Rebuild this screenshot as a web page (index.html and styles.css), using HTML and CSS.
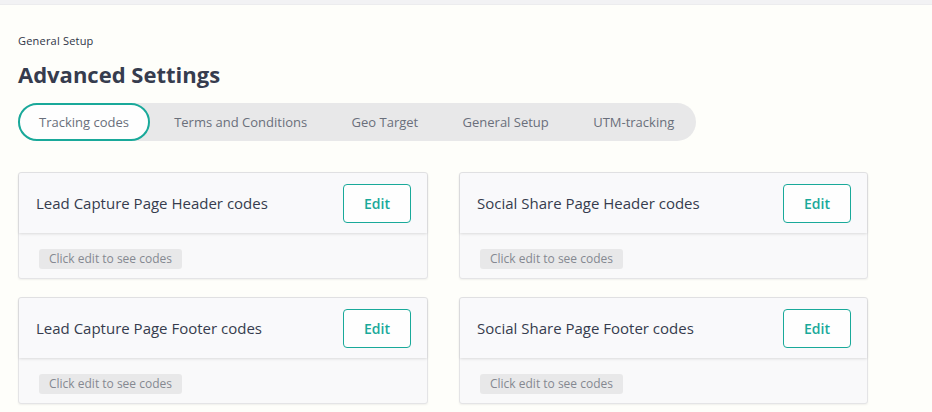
FILE: index.html
```html
<!DOCTYPE html>
<html>
<head>
<meta charset="utf-8">
<link rel="stylesheet" href="styles.css">
</head>
<body>
<div class="topstrip"></div>
<main class="page">
  <div class="crumb">General Setup</div>
  <h1 class="title">Advanced Settings</h1>
  <nav class="tabs">
    <span class="tab active">Tracking codes</span>
    <span class="tab">Terms and Conditions</span>
    <span class="tab">Geo Target</span>
    <span class="tab">General Setup</span>
    <span class="tab">UTM-tracking</span>
  </nav>
  <section class="grid">
    <div class="card">
      <div class="card-head"><span class="card-title">Lead Capture Page Header codes</span><button class="edit">Edit</button></div>
      <div class="card-body"><span class="badge">Click edit to see codes</span></div>
    </div>
    <div class="card">
      <div class="card-head"><span class="card-title">Social Share Page Header codes</span><button class="edit">Edit</button></div>
      <div class="card-body"><span class="badge">Click edit to see codes</span></div>
    </div>
    <div class="card">
      <div class="card-head"><span class="card-title">Lead Capture Page Footer codes</span><button class="edit">Edit</button></div>
      <div class="card-body"><span class="badge">Click edit to see codes</span></div>
    </div>
    <div class="card">
      <div class="card-head"><span class="card-title">Social Share Page Footer codes</span><button class="edit">Edit</button></div>
      <div class="card-body"><span class="badge">Click edit to see codes</span></div>
    </div>
  </section>
</main>
</body>
</html>
```
FILE: styles.css
```css
* { box-sizing: border-box; }
html, body { margin: 0; padding: 0; }
body {
  background: #fefefa;
  font-family: "Open Sans", "Noto Sans", sans-serif;
  color: #363c4e;
  width: 932px;
  height: 412px;
  overflow: hidden;
}
.topstrip {
  height: 5px;
  background: #f2f2f4;
  border-bottom: 1px solid #ececee;
}
.page {
  padding: 28px 0 0 18px;
}
.crumb {
  font-size: 11px;
  line-height: 15px;
  letter-spacing: 0.2px;
  color: #2f3546;
}
.title {
  margin: 11px 0 0;
  font-size: 22px;
  line-height: 30px;
  font-weight: 700;
  color: #363c4e;
}
.tabs {
  margin-top: 14px;
  display: inline-flex;
  align-items: center;
  height: 38px;
  background: #e8e8e9;
  border-radius: 19px;
}
.tab {
  height: 38px;
  display: flex;
  align-items: center;
  padding: 0 22.2px;
  font-size: 13px;
  color: #6a6f7b;
  border-radius: 19px;
}
.tab.active {
  background: #fefefe;
  border: 2px solid #19a99a;
  padding: 0 19px;
  margin-right: 2px;
}
.grid {
  margin-top: 31px;
  display: grid;
  grid-template-columns: 410px 409px;
  column-gap: 31px;
  row-gap: 18px;
}
.card {
  background: #f9f9fa;
  border: 1px solid #e4e4e6;
  border-radius: 3px;
  box-shadow: 0 1px 2px rgba(0,0,0,0.06);
  height: 107px;
}
.card-head {
  height: 60px;
  display: flex;
  align-items: center;
  justify-content: space-between;
  padding: 0 16px 0 17px;
  background: #f9f9fb;
  box-shadow: 0 1px 3px rgba(0,0,0,0.12);
  border-radius: 3px 3px 0 0;
}
.card-title {
  font-size: 15px;
  color: #363c4e;
}
.edit {
  width: 68px;
  height: 39px;
  border: 1px solid #19a99a;
  border-radius: 4px;
  background: #fefefe;
  color: #19a99a;
  font-family: "Open Sans", "Noto Sans", sans-serif;
  font-size: 14px;
  font-weight: 600;
  padding: 0;
}
.card-body {
  padding: 13px 0 0 20px;
}
.badge {
  display: inline-block;
  height: 20px;
  line-height: 20px;
  padding: 0 10px;
  background: #e8e8e9;
  border-radius: 3px;
  font-size: 12px;
  color: #858891;
}
```
